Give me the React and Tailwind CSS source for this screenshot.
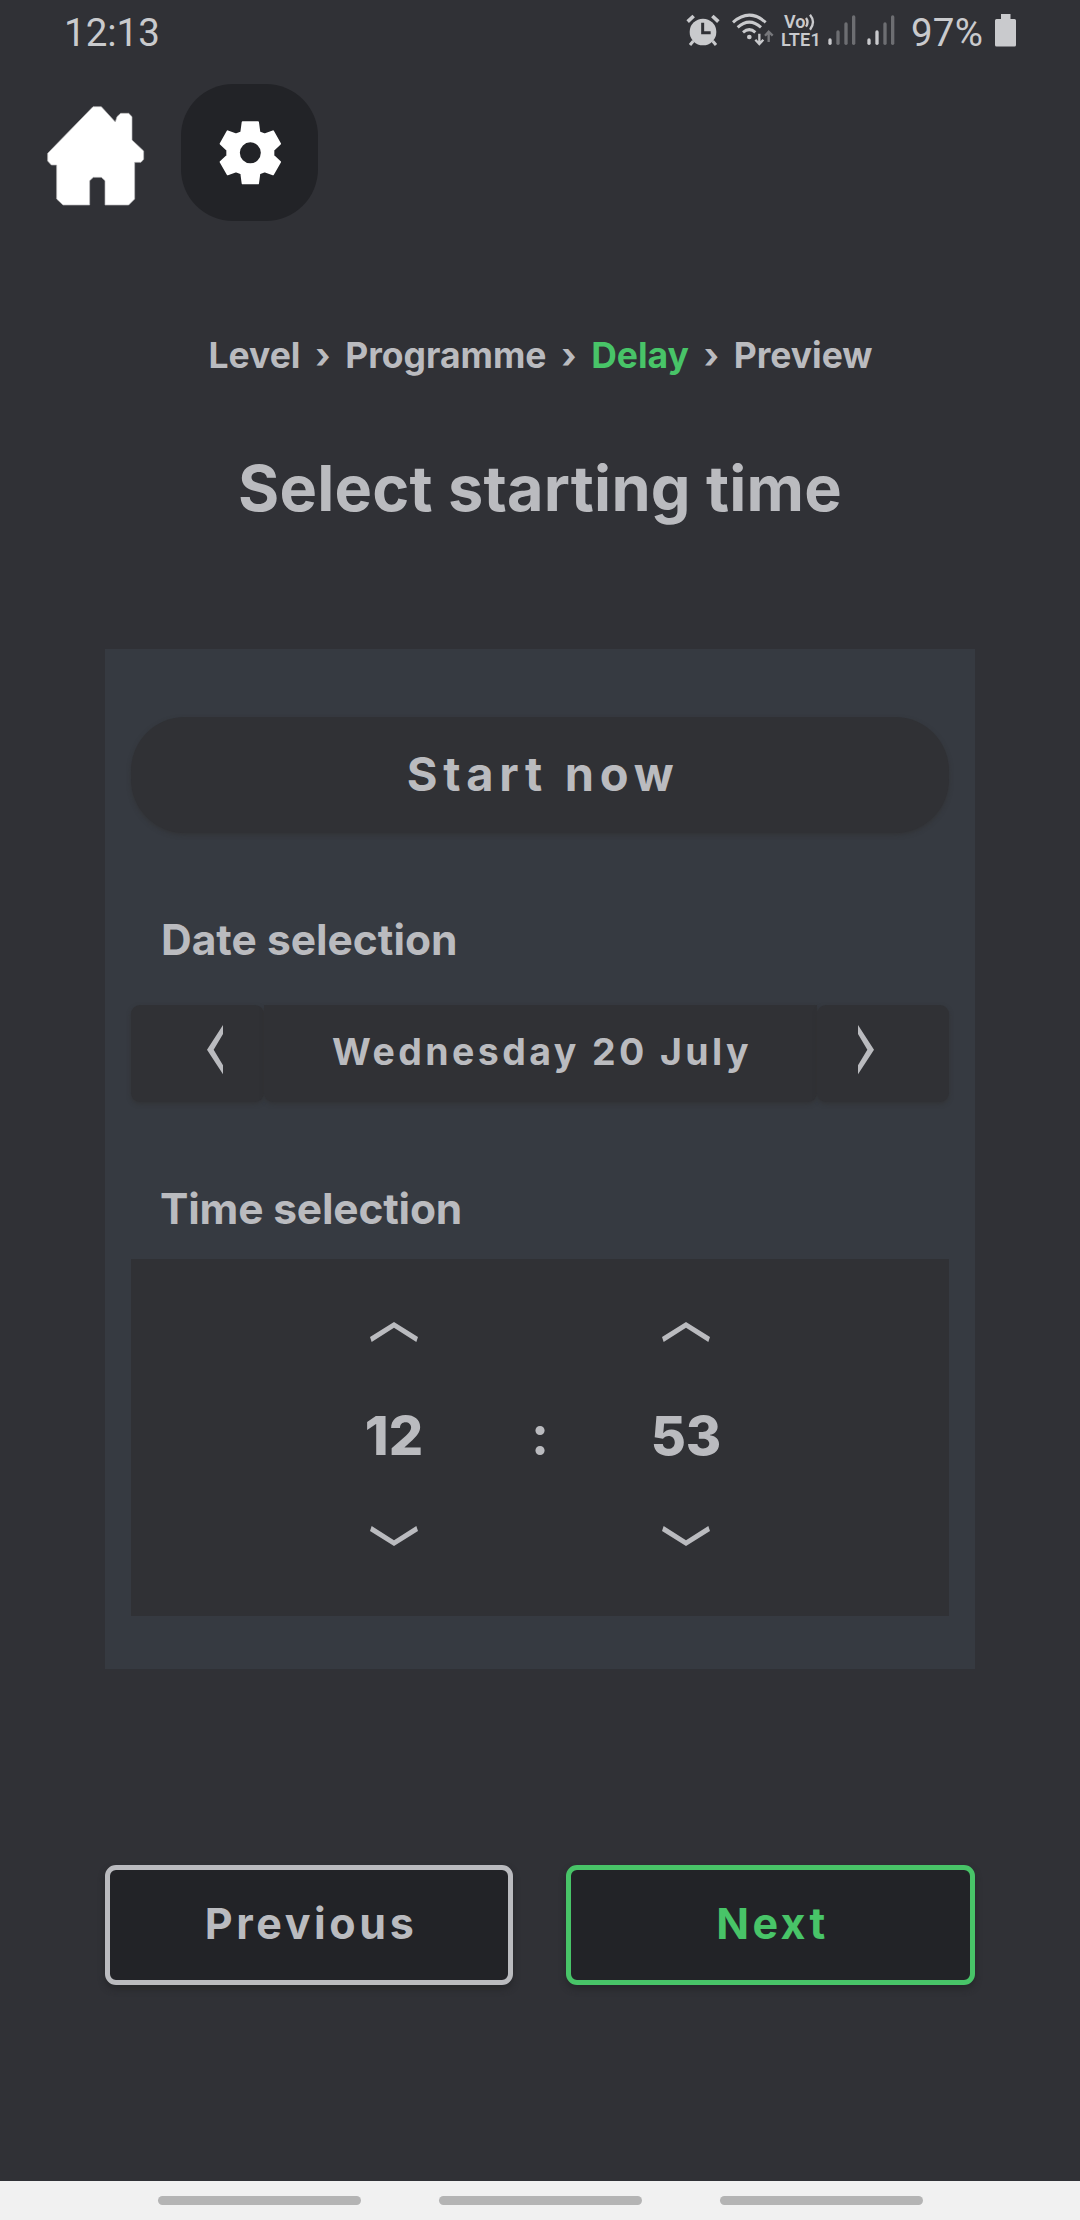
import React from 'react';

function AlarmIcon() {
  return (
    <svg width="34" height="34" viewBox="78 42 102 102" fill="none">
      <circle cx="129" cy="96" r="40" fill="#c9cacd" />
      <path d="M83 65L101 48M157 48L175 65" stroke="#c9cacd" strokeWidth="11" />
      <path d="M100 123L90 135M158 123L168 135" stroke="#c9cacd" strokeWidth="9" />
      <path d="M128 68V98H152" stroke="#303136" strokeWidth="9" />
    </svg>
  );
}

function WifiIcon() {
  return (
    <svg width="44" height="34" viewBox="213 36 132 102" fill="none" stroke="#c9cacd">
      <path d="M219 67Q268 24 317 67" strokeWidth="9" />
      <path d="M233 82Q268 51 303 82" strokeWidth="9" />
      <path d="M249 97Q268 81 286 97" strokeWidth="9" />
      <circle cx="268" cy="111" r="7" fill="#c9cacd" stroke="none" />
      <path d="M298 101V131M286 119L298 132L310 119" strokeWidth="7" />
      <path d="M326 126V98M315 107L326 95L338 107" stroke="#77787c" strokeWidth="7" />
    </svg>
  );
}

function SignalBars({ strong }) {
  const dim = '#6d6e72';
  const on = '#c9cacd';
  return (
    <svg width="28" height="32" viewBox="0 0 84 96" strokeWidth="10" strokeLinecap="round">
      <path d="M6 78V88" stroke={on} />
      <path d="M30 54V88" stroke={strong ? on : dim} />
      <path d="M54 30V88" stroke={dim} />
      <path d="M77 9V88" stroke={dim} />
    </svg>
  );
}

function StatusBar() {
  return (
    <div className="flex h-[66px] items-center pl-[64px] font-[Roboto,sans-serif] text-[38.500px] font-normal leading-none text-[#c9cacd]">
      <span className="w-[96px] whitespace-nowrap">12:13</span>
      <div className="ml-[526px] flex h-full flex-1 items-start">
        <div className="mt-[14px] w-[45px]"><AlarmIcon /></div>
        <div className="mt-[12px] w-[50px]"><WifiIcon /></div>
        <div className="mt-[13px] flex w-[47px] flex-col font-semibold leading-[18px]">
          <span className="flex pl-[3px] text-[18px]">
            Vo
            <svg className="shrink-0" width="12" height="18" viewBox="0 0 36 54" fill="none" stroke="#c9cacd" strokeWidth="7">
              <path d="M3 15Q12 27 3 41M15 5Q33 27 15 50" />
            </svg>
          </span>
          <span className="whitespace-nowrap text-[18px] tracking-[0.2px]">LTE1</span>
        </div>
        <div className="mt-[14px] w-[39px]"><SignalBars /></div>
        <div className="mt-[14px] w-[44px]"><SignalBars strong /></div>
        <span className="w-[84px] whitespace-nowrap leading-[66px] tracking-[0.2px]">97%</span>
        <svg className="mt-[14px]" width="21" height="33" viewBox="0 0 21 33" fill="#c9cacd">
          <path d="M6 0H15.500V5H19.500Q21 5 21 6.500V31Q21 32.500 19.500 32.500H1.500Q0 32.500 0 31V6.500Q0 5 1.500 5H6Z" />
        </svg>
      </div>
    </div>
  );
}

function HomeIcon() {
  return (
    <svg width="98" height="100" viewBox="142 318 294 300" fill="#ffffff" stroke="#b9b9bb" strokeWidth="2">
      <path d="M280 320H305L347 366L352 350L363 340H387L397 350V420L432 453V478L424 487H405V597L387 615H316V542L305 532H281L270 542V615H190L171 597V495H155L144 483V460Z" />
    </svg>
  );
}

function GearIcon() {
  return (
    <svg width="64" height="64" viewBox="652 362 192 192" fill="#ffffff">
      <path
        fillRule="evenodd"
        stroke="#ffffff"
        strokeWidth="6"
        strokeLinejoin="round"
        d="M726 366H772L776 396L792 402L817 393L838 430L818 449V466L838 485L817 522L792 513L776 519L772 549H726L722 519L706 513L681 522L660 485L680 466V449L660 430L681 393L706 402L722 396ZM749 423A34.500 34.500 0 1 0 749 492A34.500 34.500 0 1 0 749 423Z"
      />
    </svg>
  );
}

function SideChevron({ flip }) {
  return (
    <svg className={flip ? '-scale-x-100' : ''} width="16" height="50" viewBox="0 0 48 150" fill="#babbbf">
      <path d="M48 0V27L20 74L48 121V148L0 74Z" />
    </svg>
  );
}

function Caret({ down }) {
  return (
    <svg className={down ? '-scale-y-100' : ''} width="48" height="20" viewBox="0 0 144 60" fill="#babbbf">
      <path d="M72 0L144 45L139 60L72 17L5 60L0 45Z" />
    </svg>
  );
}

function Spinner({ value }) {
  return (
    <div className="flex w-[120px] flex-col items-center">
      <Caret />
      <span className="mb-[60px] mt-[64px] text-[54px] font-extrabold leading-[60px]">{value}</span>
      <Caret down />
    </div>
  );
}

function Breadcrumb() {
  return (
    <div className="flex h-[50px] items-center justify-center gap-[14.700px] pl-px text-[35.500px] leading-none">
      <span>Level</span>
      <span>›</span>
      <span>Programme</span>
      <span>›</span>
      <span className="text-[#48c468]">Delay</span>
      <span>›</span>
      <span>Preview</span>
    </div>
  );
}

export default function App() {
  return (
    <div className="flex h-[2220px] w-[1080px] flex-col overflow-hidden bg-[#303136] font-[Inter,sans-serif] font-bold text-[#babbbf]">
      <StatusBar />
      <div className="mt-[18px] flex h-[137px] pl-[47px]">
        <div className="mt-[22px] w-[134px]"><HomeIcon /></div>
        <div className="flex h-[137px] w-[137px] items-center justify-center rounded-[52px] bg-[#222327]">
          <GearIcon />
        </div>
      </div>

      <div className="mt-[110px]"><Breadcrumb /></div>
      <h1 className="mt-[67px] h-20 text-center text-[63px] font-bold leading-[80px] tracking-[0.2px]">Select starting time</h1>

      <div className="mx-[105px] mt-[121px] flex h-[1020px] flex-col bg-[#363a41] px-[26px] pt-[68px]">
        <button className="h-[116px] rounded-[54px] bg-[#303135] pb-[3px] pl-[6px] text-[47px] leading-none tracking-[5.700px] shadow-[0_2px_4px_rgba(48,49,50,0.7)]">
          Start now
        </button>
        <div className="mt-[77px] h-[60px] pl-[30px] text-[42.500px] leading-[60px]">Date selection</div>
        <div className="mt-[35px] flex h-[97px]">
          <button className="flex w-[133px] items-start rounded-[9px] bg-[#303135] pl-[76px] pt-[20px] shadow-[0_2px_4px_rgba(48,49,50,0.7)]">
            <SideChevron />
          </button>
          <div className="h-[97px] flex-1 whitespace-nowrap rounded-b-[9px] bg-[#303135] pl-[3px] text-center text-[37.500px] leading-[93px] tracking-[3.400px] shadow-[0_2px_4px_rgba(48,49,50,0.7)]">
            Wednesday 20 July
          </div>
          <button className="flex w-[132px] items-start rounded-[9px] bg-[#303135] pl-[41px] pt-[20px] shadow-[0_2px_4px_rgba(48,49,50,0.7)]">
            <SideChevron flip />
          </button>
        </div>
        <div className="mt-[77px] h-[60px] pl-[29px] text-[42.500px] leading-[60px] tracking-[-0.180px]">Time selection</div>
        <div className="mt-[20px] flex h-[357px] justify-center bg-[#303135] pt-[63px]">
          <Spinner value="12" />
          <span className="mt-[84px] w-[172px] text-center text-[54px] font-bold leading-[60px]">:</span>
          <Spinner value="53" />
        </div>
      </div>

      <div className="mx-[105px] mt-[196px] flex h-[120px] justify-between text-[43px] leading-none">
        <button className="w-[408px] rounded-[11px] border-5 border-[#babbbf] bg-[#222327] pb-[3px] pl-[4px] tracking-[3.600px] shadow-[0_4px_6px_rgba(34,35,38,0.7)]">
          Previous
        </button>
        <button className="w-[409px] rounded-[11px] border-5 border-[#48c468] bg-[#222327] pb-[3px] pl-[4px] tracking-[3.400px] text-[#48c468] shadow-[0_4px_6px_rgba(34,35,38,0.7)]">
          Next
        </button>
      </div>

      <div className="mt-auto flex h-[39px] items-center justify-center gap-[78px] bg-[#f1f1f1]">
        <div className="h-[9px] w-[203px] rounded-full bg-[#b4b4b4]" />
        <div className="h-[9px] w-[203px] rounded-full bg-[#b4b4b4]" />
        <div className="h-[9px] w-[203px] rounded-full bg-[#b4b4b4]" />
      </div>
    </div>
  );
}
